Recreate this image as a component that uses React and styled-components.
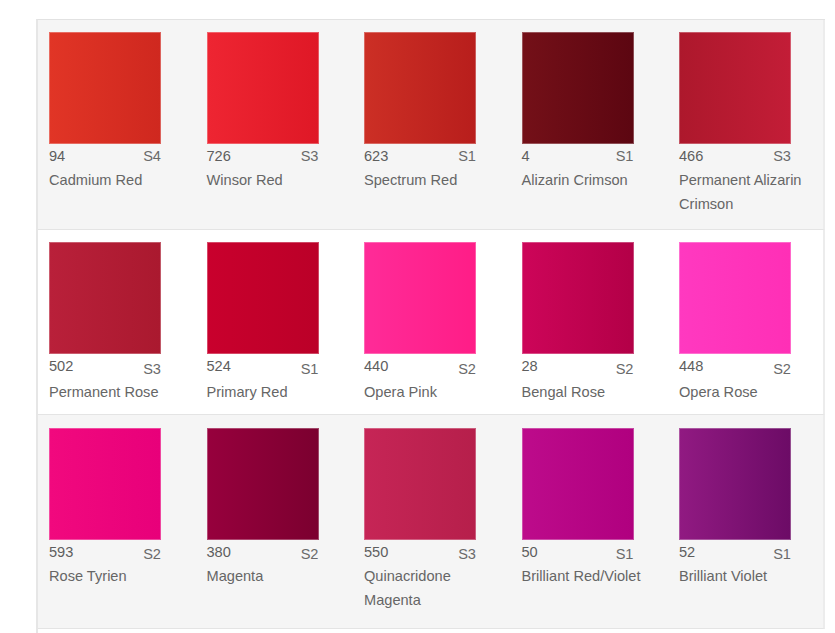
import React from "react";
import styled, { createGlobalStyle } from "styled-components";

const GlobalStyle = createGlobalStyle`
  html, body {
    margin: 0;
    padding: 0;
    background: #fff;
    font-family: "Liberation Sans", Arial, sans-serif;
  }
`;

const Page = styled.div`
  padding-top: 19px;
  padding-left: 36px;
  width: 835px;
  height: 633px;
  box-sizing: border-box;
  overflow: hidden;
`;

const Chart = styled.div`
  width: 789px;
  min-height: 620px;
  border-top: 1px solid #e2e2e2;
  border-left: 2px solid #e6e6e6;
  box-sizing: border-box;
`;

const Row = styled.div`
  display: grid;
  grid-template-columns: repeat(5, 140px);
  column-gap: 17.5px;
  padding: ${(p) => p.$pad || "12px 0 12px 11px"};
  background: ${(p) => (p.$shaded ? "#f5f5f5" : "#fff")};
  border-bottom: 1px solid #e4e4e4;
  border-right: 2px solid #ececec;
`;

const Cell = styled.div`
  display: flex;
  flex-direction: column;
`;

const Swatch = styled.div`
  width: 112px;
  height: 112px;
  background: linear-gradient(90deg, ${(p) => p.$from}, ${(p) => p.$to});
  box-shadow: inset 0 0 0 1px rgba(255, 255, 255, 0.28);
`;

const CodeLine = styled.div`
  width: 112px;
  height: ${(p) => p.$height || 24}px;
  display: flex;
  justify-content: space-between;
  font-size: 14.6px;
  line-height: 24px;
  color: #5e5e5e;
`;

const Series = styled.span`
  color: #6a6a6a;
  margin-top: ${(p) => p.$drop || 0}px;
`;

const Name = styled.div`
  font-size: 14.6px;
  line-height: 24px;
  color: #666;
`;

const rows = [
  {
    shaded: true,
    pad: "12px 0 13px 11px",
    drop: 0,
    codeHeight: 24,
    items: [
      ["94", "S4", "Cadmium Red", "#e13526", "#cf281f"],
      ["726", "S3", "Winsor Red", "#ee2532", "#df1826"],
      ["623", "S1", "Spectrum Red", "#cc2f25", "#b81e1c"],
      ["4", "S1", "Alizarin Crimson", "#741018", "#5c0611"],
      ["466", "S3", "Permanent Alizarin Crimson", "#ad182c", "#c31d37"],
    ],
  },
  {
    shaded: false,
    pad: "12px 0 10px 11px",
    drop: 3,
    codeHeight: 26,
    items: [
      ["502", "S3", "Permanent Rose", "#b9203a", "#aa192f"],
      ["524", "S1", "Primary Red", "#c9002d", "#bb0028"],
      ["440", "S2", "Opera Pink", "#ff2b98", "#ff1d87"],
      ["28", "S2", "Bengal Rose", "#cd0559", "#b30047"],
      ["448", "S2", "Opera Rose", "#ff39c0", "#ff2fb6"],
    ],
  },
  {
    shaded: true,
    pad: "13px 0 16px 11px",
    drop: 2,
    codeHeight: 24,
    items: [
      ["593", "S2", "Rose Tyrien", "#f1097e", "#e8007a"],
      ["380", "S2", "Magenta", "#97003d", "#7b002f"],
      ["550", "S3", "Quinacridone Magenta", "#c62556", "#b61f4b"],
      ["50", "S1", "Brilliant Red/Violet", "#bd0b8b", "#b0007f"],
      ["52", "S1", "Brilliant Violet", "#911a82", "#6c0b66"],
    ],
  },
];

const ColourCell = ({ code, series, name, from, to, drop, codeHeight }) => (
  <Cell>
    <Swatch $from={from} $to={to} />
    <CodeLine $height={codeHeight}>
      <span>{code}</span>
      <Series $drop={drop}>{series}</Series>
    </CodeLine>
    <Name>{name}</Name>
  </Cell>
);

const App = () => {
  return (
    <>
      <GlobalStyle />
      <Page>
        <Chart>
          {rows.map((row, i) => (
            <Row key={i} $shaded={row.shaded} $pad={row.pad}>
              {row.items.map(([code, series, name, from, to]) => (
                <ColourCell
                  key={code}
                  code={code}
                  series={series}
                  name={name}
                  from={from}
                  to={to}
                  drop={row.drop}
                  codeHeight={row.codeHeight}
                />
              ))}
            </Row>
          ))}
        </Chart>
      </Page>
    </>
  );
};

export default App;
